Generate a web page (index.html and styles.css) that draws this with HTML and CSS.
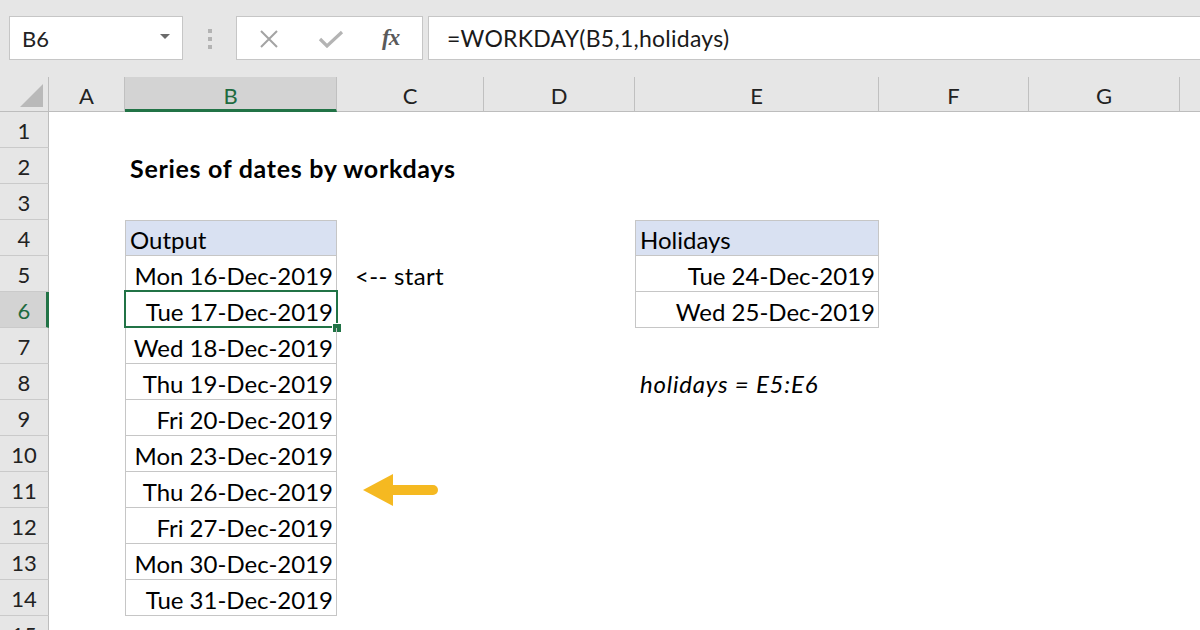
FILE: index.html
```html
<!DOCTYPE html>
<html>
<head>
<meta charset="utf-8">
<link rel="stylesheet" href="styles.css">
</head>
<body>
<div class="app">
  <div class="toolbar">
    <div class="namebox"><span class="nb-text">B6</span><span class="nb-arrow"></span></div>
    <div class="grip"><i></i><i></i><i></i></div>
    <div class="fxbox">
      <svg class="ic-x" width="20" height="18" viewBox="0 0 20 18"><path d="M2 1 L18 17 M18 1 L2 17" stroke="#a3a3a3" stroke-width="2" fill="none"/></svg>
      <svg class="ic-ok" width="26" height="18" viewBox="0 0 26 18"><path d="M2 9 L9 16 L24 2" stroke="#b4b4b4" stroke-width="3.2" fill="none"/></svg>
      <span class="fx">fx</span>
    </div>
    <div class="formula">=WORKDAY(B5,1,holidays)</div>
  </div>
  <div class="sheet">
    <div class="row hdr">
      <div class="corner"><svg width="48" height="34" viewBox="0 0 48 34"><polygon points="43,7 43,30 20,30" fill="#b9b9b9"/></svg></div>
      <div class="ch">A</div>
      <div class="ch sel">B</div>
      <div class="ch">C</div>
      <div class="ch">D</div>
      <div class="ch">E</div>
      <div class="ch">F</div>
      <div class="ch">G</div>
      <div class="ch last"></div>
    </div>
    <div class="row">
      <div class="rh">1</div>
      <div class="c"></div><div class="c"></div><div class="c"></div><div class="c"></div><div class="c"></div><div class="c"></div><div class="c"></div><div class="c"></div>
    </div>
    <div class="row">
      <div class="rh">2</div>
      <div class="c"></div><div class="c title">Series of dates by workdays</div><div class="c"></div><div class="c"></div><div class="c"></div><div class="c"></div><div class="c"></div><div class="c"></div>
    </div>
    <div class="row">
      <div class="rh">3</div>
      <div class="c"></div><div class="c"></div><div class="c"></div><div class="c"></div><div class="c"></div><div class="c"></div><div class="c"></div><div class="c"></div>
    </div>
    <div class="row">
      <div class="rh">4</div>
      <div class="c"></div><div class="c box top hd">Output</div><div class="c"></div><div class="c"></div><div class="c box top hd">Holidays</div><div class="c"></div><div class="c"></div><div class="c"></div>
    </div>
    <div class="row">
      <div class="rh">5</div>
      <div class="c"></div><div class="c box r">Mon 16-Dec-2019</div><div class="c note">&lt;-- start</div><div class="c"></div><div class="c box r">Tue 24-Dec-2019</div><div class="c"></div><div class="c"></div><div class="c"></div>
    </div>
    <div class="row">
      <div class="rh sel">6</div>
      <div class="c"></div><div class="c box r active">Tue 17-Dec-2019</div><div class="c"></div><div class="c"></div><div class="c box r">Wed 25-Dec-2019</div><div class="c"></div><div class="c"></div><div class="c"></div>
    </div>
    <div class="row">
      <div class="rh">7</div>
      <div class="c"></div><div class="c box r">Wed 18-Dec-2019</div><div class="c"></div><div class="c"></div><div class="c"></div><div class="c"></div><div class="c"></div><div class="c"></div>
    </div>
    <div class="row">
      <div class="rh">8</div>
      <div class="c"></div><div class="c box r">Thu 19-Dec-2019</div><div class="c"></div><div class="c"></div><div class="c it">holidays = E5:E6</div><div class="c"></div><div class="c"></div><div class="c"></div>
    </div>
    <div class="row">
      <div class="rh">9</div>
      <div class="c"></div><div class="c box r">Fri 20-Dec-2019</div><div class="c"></div><div class="c"></div><div class="c"></div><div class="c"></div><div class="c"></div><div class="c"></div>
    </div>
    <div class="row">
      <div class="rh">10</div>
      <div class="c"></div><div class="c box r">Mon 23-Dec-2019</div><div class="c"></div><div class="c"></div><div class="c"></div><div class="c"></div><div class="c"></div><div class="c"></div>
    </div>
    <div class="row">
      <div class="rh">11</div>
      <div class="c"></div><div class="c box r">Thu 26-Dec-2019</div><div class="c"><svg class="arrow" width="80" height="34" viewBox="0 0 80 34"><polygon points="1,17 31,1 31,33" fill="#f5b921"/><line x1="30" y1="17" x2="71" y2="17" stroke="#f5b921" stroke-width="10" stroke-linecap="round"/></svg></div><div class="c"></div><div class="c"></div><div class="c"></div><div class="c"></div><div class="c"></div>
    </div>
    <div class="row">
      <div class="rh">12</div>
      <div class="c"></div><div class="c box r">Fri 27-Dec-2019</div><div class="c"></div><div class="c"></div><div class="c"></div><div class="c"></div><div class="c"></div><div class="c"></div>
    </div>
    <div class="row">
      <div class="rh">13</div>
      <div class="c"></div><div class="c box r">Mon 30-Dec-2019</div><div class="c"></div><div class="c"></div><div class="c"></div><div class="c"></div><div class="c"></div><div class="c"></div>
    </div>
    <div class="row">
      <div class="rh">14</div>
      <div class="c"></div><div class="c box r">Tue 31-Dec-2019</div><div class="c"></div><div class="c"></div><div class="c"></div><div class="c"></div><div class="c"></div><div class="c"></div>
    </div>
    <div class="row">
      <div class="rh">15</div>
      <div class="c"></div><div class="c"></div><div class="c"></div><div class="c"></div><div class="c"></div><div class="c"></div><div class="c"></div><div class="c"></div>
    </div>
  </div>
</div>
</body>
</html>
```

FILE: styles.css
```css
* { box-sizing: border-box; margin: 0; padding: 0; }
html, body { width: 1200px; height: 630px; overflow: hidden; }
body { background: #e6e6e6; font-family: "Lato", "Open Sans", sans-serif; color: #000; }
.app { width: 1200px; height: 630px; overflow: hidden; }

/* toolbar */
.toolbar { height: 77px; display: flex; align-items: flex-start; padding: 16px 0 0 9px; }
.namebox { width: 174px; height: 44px; background: #fff; border: 1px solid #c6c6c6; display: flex; align-items: center; justify-content: space-between; padding: 0 12px 0 12px; font-size: 22px; color: #222; }
.nb-arrow { width: 0; height: 0; border-left: 5.5px solid transparent; border-right: 5.5px solid transparent; border-top: 5px solid #6b6b6b; margin-top: -4px; }
.grip { width: 53px; height: 44px; display: flex; flex-direction: column; align-items: center; gap: 4px; padding-top: 13px; }
.grip i { display: block; width: 4px; height: 4px; background: #b3b3b3; }
.fxbox { width: 187px; height: 44px; background: #fff; border: 1px solid #c6c6c6; display: flex; align-items: center; }
.ic-x { margin-left: 22px; margin-top: 2px; }
.ic-ok { margin-left: 39px; margin-top: 1px; }
.fx { margin-left: 38px; font-family: "Liberation Serif", "DejaVu Serif", serif; font-style: italic; font-weight: bold; font-size: 23px; color: #5a5a5a; letter-spacing: -1px; }
.formula { flex: 1; margin-left: 5px; height: 44px; background: #fff; border: 1px solid #c6c6c6; border-right: none; padding-left: 18px; display: flex; align-items: center; font-size: 23px; letter-spacing: 0.25px; color: #1a1a1a; }

/* sheet */
.sheet { background: #fff; }
.row { display: grid; grid-template-columns: 49px 76px 212px 147px 151px 244px 150px 151px 1fr; height: 36px; }
.row.hdr { height: 35px; background: #e6e6e6; }
.corner { border-right: 1px solid #bdbdbd; border-bottom: 1px solid #bdbdbd; }
.corner svg { display: block; }
.ch { border-right: 1px solid #c0c0c0; border-bottom: 1px solid #bdbdbd; display: flex; align-items: center; justify-content: center; font-size: 22px; color: #222; padding-top: 2px; }
.ch.last { border-right: none; }
.ch.sel { background: #d3d3d3; border-bottom: 3px solid #217346; color: #1e6b40; padding-top: 4px; }
.rh { background: #e6e6e6; border-right: 1px solid #bdbdbd; border-bottom: 1px solid #cacaca; display: flex; align-items: center; justify-content: center; font-size: 22px; color: #222; padding-top: 1px; }
.rh.sel { background: #d3d3d3; border-right: 3px solid #217346; color: #1e6b40; padding-left: 2px; }

.c { position: relative; display: flex; align-items: center; padding: 3px 3px 0 4px; font-size: 24px; white-space: nowrap; }
.c.r { justify-content: flex-end; }
.c.box { border-left: 1px solid #c6c6c6; border-right: 1px solid #c6c6c6; border-bottom: 1px solid #c6c6c6; }
.c.box.top { border-top: 1px solid #c6c6c6; }
.c.hd { background: #d9e1f2; }
.c.title { font-weight: bold; padding-left: 5px; font-size: 25px; letter-spacing: 0.7px; }
.c.note { padding-left: 18px; letter-spacing: 0.3px; }
.c.it { font-style: italic; padding-left: 5px; letter-spacing: 0.8px; }
.c.active::before { content: ""; position: absolute; left: -2px; top: -2px; right: -2px; bottom: -1px; border: 2px solid #217346; }
.c.active::after { content: ""; position: absolute; right: -5px; bottom: -5px; width: 8px; height: 8px; background: #217346; box-shadow: 0 0 0 1px #fff; }
.arrow { position: absolute; left: 25px; top: 1px; }
```
